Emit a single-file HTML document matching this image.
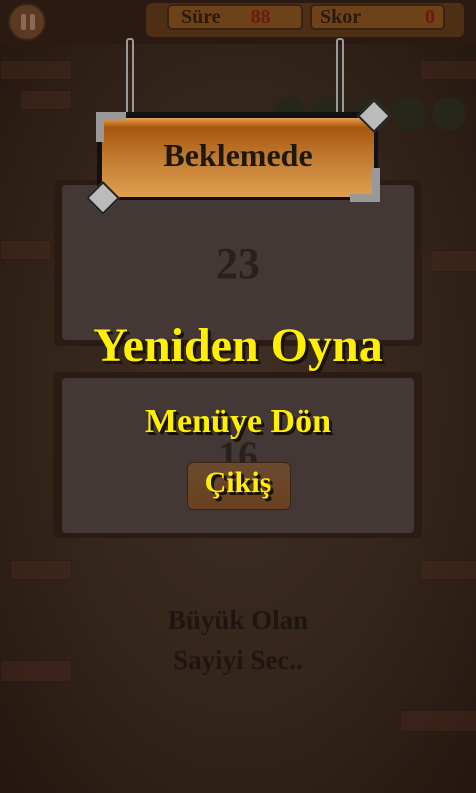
<!DOCTYPE html>
<html><head><meta charset="utf-8"><style>
body{margin:0;width:476px;height:793px;overflow:hidden;position:relative;font-family:"Liberation Serif",serif;
background:radial-gradient(ellipse at 50% 50%,#3f2f24 0%,#34251b 55%,#24170f 100%);}
.abs{position:absolute}
.brick{position:absolute;background:#4a2a1e;border:1px solid #2a1810;opacity:.45}
.top{left:0;top:0;width:476px;height:44px;background:#2a1a12}
.pause{left:8px;top:3px;width:38px;height:38px;border-radius:50%;background:#5a3a22;border:2px solid #3a2414;box-sizing:border-box}
.pause:before,.pause:after{content:"";position:absolute;top:9px;width:5px;height:16px;background:#8a6a50;border-radius:2px}
.pause:before{left:11px}.pause:after{left:20px}
.bar{left:146px;top:3px;width:318px;height:34px;background:#4e2f16;border-radius:6px}
.cell{top:4px;height:26px;border:2px solid #3a2212;border-radius:5px;background:#6e4219;box-sizing:border-box;font-weight:bold;font-size:20px;line-height:22px;color:#2a1a10}
.panel{background:#2c1b12;border-radius:4px}
.inner{background:#433835;border-radius:4px}
.y{color:#ffef00;font-weight:bold;text-shadow:2px 2px 0 #1a1208,3px 3px 0 #1a1208;text-align:center;width:476px;left:0}
.chain{width:4px;border:2px solid #999;border-radius:3px;background:transparent}
.dot{width:34px;height:34px;border-radius:50%;background:#26261a;top:97px}
</style></head><body>
<div class="brick" style="left:0;top:60px;width:70px;height:18px"></div>
<div class="brick" style="left:20px;top:90px;width:50px;height:18px"></div>
<div class="brick" style="left:0;top:240px;width:50px;height:18px"></div>
<div class="brick" style="left:10px;top:560px;width:60px;height:18px"></div>
<div class="brick" style="left:0;top:660px;width:70px;height:20px"></div>
<div class="brick" style="left:420px;top:60px;width:56px;height:18px"></div>
<div class="brick" style="left:430px;top:250px;width:46px;height:20px"></div>
<div class="brick" style="left:420px;top:560px;width:56px;height:18px"></div>
<div class="brick" style="left:400px;top:710px;width:76px;height:20px"></div>
<div class="abs top"></div>
<div class="abs pause"></div>
<div class="abs bar"></div>
<div class="abs cell" style="left:167px;width:136px"><span style="margin-left:12px">Süre</span><span style="margin-left:30px;color:#6a1a10">88</span></div>
<div class="abs cell" style="left:310px;width:135px"><span style="margin-left:8px">Skor</span><span style="float:right;margin-right:8px;color:#6a1a10">0</span></div>
<div class="abs dot" style="left:272px"></div><div class="abs dot" style="left:312px"></div><div class="abs dot" style="left:352px"></div><div class="abs dot" style="left:392px"></div><div class="abs dot" style="left:432px"></div>
<div class="abs chain" style="left:126px;top:38px;height:76px"></div>
<div class="abs chain" style="left:336px;top:38px;height:76px"></div>
<div class="abs panel" style="left:54px;top:180px;width:368px;height:166px"></div>
<div class="abs inner" style="left:62px;top:185px;width:352px;height:155px"></div>
<div class="abs" style="left:0;width:476px;top:238px;text-align:center;font-size:44px;font-weight:bold;color:#2a201c">23</div>
<div class="abs panel" style="left:53px;top:372px;width:369px;height:166px"></div>
<div class="abs inner" style="left:62px;top:378px;width:352px;height:155px"></div>
<div class="abs" style="left:0;width:476px;top:432px;text-align:center;font-size:40px;font-weight:bold;color:#2a201c">16</div>
<div class="abs" style="left:187px;top:462px;width:102px;height:46px;background:linear-gradient(#6a4a30,#6a4020);border:1px solid #3a2414;border-radius:6px"></div>
<div class="abs" style="left:97px;top:112px;width:281px;height:88px;background:#111;border-radius:3px"></div>
<div class="abs" style="left:102px;top:118px;width:272px;height:79px;background:linear-gradient(#e8a050 0%,#a8560f 12%,#c07a30 50%,#e0a050 100%)"></div>
<div class="abs" style="left:0;width:476px;top:137px;text-align:center;font-size:32px;font-weight:bold;color:#1c1810">Beklemede</div>
<div class="abs" style="left:96px;top:112px;width:30px;height:30px;border-left:8px solid #999;border-top:8px solid #999;box-sizing:border-box"></div>
<div class="abs" style="left:350px;top:168px;width:30px;height:34px;border-right:8px solid #999;border-bottom:8px solid #999;box-sizing:border-box"></div>
<div class="abs" style="left:91px;top:186px;width:20px;height:20px;background:#bbb;transform:rotate(45deg);border:2px solid #222"></div>
<div class="abs" style="left:362px;top:104px;width:20px;height:20px;background:#bbb;transform:rotate(45deg);border:2px solid #222"></div>
<div class="abs y" style="top:318px;font-size:48px">Yeniden Oyna</div>
<div class="abs y" style="top:403px;font-size:34px">Menüye Dön</div>
<div class="abs y" style="top:466px;font-size:30px">Çikiş</div>
<div class="abs" style="left:0;width:476px;top:600px;text-align:center;font-size:27px;font-weight:bold;color:#1f1510;line-height:40px">Büyük Olan<br>Sayiyi Sec..</div>
</body></html>
